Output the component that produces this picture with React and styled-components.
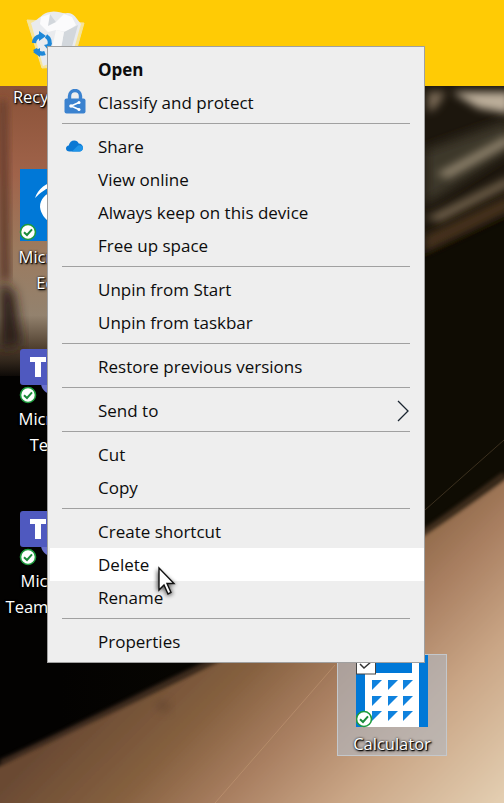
import React from "react";
import styled, { createGlobalStyle } from "styled-components";

const Global = createGlobalStyle`
  html, body { margin: 0; padding: 0; width: 504px; height: 803px; overflow: hidden; background: #000; }
  * { box-sizing: border-box; }
`;

const Desktop = styled.div`
  position: relative;
  width: 504px;
  height: 803px;
  overflow: hidden;
  font-family: "Open Sans", "Liberation Sans", sans-serif;
`;

const WallpaperArt = styled.svg`
  position: absolute;
  left: 0;
  top: 0;
  display: block;
`;

const BadgeLayer = styled.svg`
  position: absolute;
  left: 0;
  top: 0;
  display: block;
`;

const DesktopIcon = styled.div`
  position: absolute;
  left: ${(p) => p.$x}px;
  top: ${(p) => p.$y}px;
  width: ${(p) => p.$w || 100}px;
  display: flex;
  flex-direction: column;
  align-items: center;
`;

const IconLabel = styled.div`
  color: #fff;
  font-size: 16.5px;
  line-height: 26px;
  text-align: center;
  white-space: nowrap;
  text-shadow: 1px 1px 1px #000, 1px 1px 3px #000, 0 0 2px rgba(0, 0, 0, 0.7);
`;

const SelectedIcon = styled.div`
  position: absolute;
  left: 337px;
  top: 654px;
  width: 110px;
  height: 102px;
  display: flex;
  flex-direction: column;
  align-items: center;
  background: rgba(178, 184, 194, 0.62);
  border: 1px solid #c4c8cc;
`;

const CalcArt = styled.svg`
  display: block;
  flex: none;
`;

const CalcLabel = styled(IconLabel)`
  margin-top: 3px;
`;

const Menu = styled.div`
  position: absolute;
  left: 47px;
  top: 46px;
  width: 378px;
  height: 617px;
  padding: 6px 0;
  background: #eeeeee;
  border: 1px solid #a0a0a0;
  display: flex;
  flex-direction: column;
`;

const Row = styled.div`
  height: 33px;
  flex: none;
  display: flex;
  align-items: center;
  margin-left: 2px;
  padding-left: 48px;
  padding-right: 15px;
  position: relative;
  font-size: 17px;
  font-weight: ${(p) => (p.$bold ? 700 : 400)};
  color: #0c0c0c;
  background: ${(p) => (p.$hover ? "#ffffff" : "transparent")};
`;

const RowIcon = styled.span`
  position: absolute;
  display: block;
  line-height: 0;
  left: ${(p) => p.$left}px;
  top: ${(p) => p.$top}px;
`;

const RowText = styled.span`
  flex: 1;
  white-space: nowrap;
`;

const Separator = styled.div`
  flex: none;
  height: 1px;
  background: #a0a0a0;
  margin: 4px 14px 6px 14px;
`;

const Cursor = styled.svg`
  position: absolute;
  left: 150px;
  top: 560px;
  overflow: visible;
`;

const Wallpaper = () => (
  <WallpaperArt width="504" height="803" viewBox="0 0 504 803">
    <defs>
      <linearGradient id="sand" gradientUnits="userSpaceOnUse" x1="300" y1="490" x2="558" y2="748">
        <stop offset="0" stopColor="#6a4a33" />
        <stop offset="0.25" stopColor="#85603f" />
        <stop offset="0.45" stopColor="#a87e60" />
        <stop offset="0.68" stopColor="#c9a585" />
        <stop offset="1" stopColor="#e4cfb2" />
      </linearGradient>
      <linearGradient id="left" gradientUnits="userSpaceOnUse" x1="0" y1="86" x2="0" y2="380">
        <stop offset="0" stopColor="#8a5238" />
        <stop offset="0.3" stopColor="#a0634a" />
        <stop offset="0.55" stopColor="#9c7a5e" />
        <stop offset="0.78" stopColor="#93826e" />
        <stop offset="0.9" stopColor="#4a3a2a" />
        <stop offset="1" stopColor="#050302" />
      </linearGradient>
      <linearGradient id="night" gradientUnits="userSpaceOnUse" x1="60" y1="0" x2="425" y2="0">
        <stop offset="0" stopColor="#030201" />
        <stop offset="1" stopColor="#0f0c03" />
      </linearGradient>
      <filter id="b6" x="-30%" y="-30%" width="160%" height="160%"><feGaussianBlur stdDeviation="6" /></filter>
      <filter id="b4" x="-30%" y="-80%" width="160%" height="260%"><feGaussianBlur stdDeviation="4" /></filter>
      <filter id="b2" x="-10%" y="-30%" width="120%" height="160%"><feGaussianBlur stdDeviation="2" /></filter>
    </defs>
    <rect width="504" height="803" fill="url(#night)" />
    <rect x="0" y="86" width="60" height="290" fill="url(#left)" />
    <path d="M0 280 L14 292 L22 345 L0 350Z" fill="#2a1c12" filter="url(#b6)" />
    <path d="M0 100 L6 100 L10 280 L0 280Z" fill="#5a3426" filter="url(#b4)" />

    <path d="M415 80 H514 V212 L415 258Z" fill="#1c160c" filter="url(#b4)" />
    <path d="M428 92 L446 92 L436 108 L428 112Z" fill="#7a6a56" filter="url(#b4)" />
    <path d="M452 92 H510 V114 L478 108Z" fill="#bcae9a" filter="url(#b4)" />
    <path d="M425 150 L510 120 V150 L425 205Z" fill="#3d382b" filter="url(#b6)" />
    <path d="M436 174 L510 134 V144 L448 178Z" fill="#91846e" filter="url(#b4)" />
    <path d="M425 218 L510 176 V186 L440 222Z" fill="#6e5e48" filter="url(#b4)" />
    <path d="M425 236 L510 196 V210 L425 252Z" fill="#46331f" filter="url(#b4)" />

    <path d="M-10 770 C60 735 140 700 220 660 C300 615 400 555 514 472 V813 H-10Z" fill="url(#sand)" filter="url(#b2)" />
    <path d="M0 762 C60 735 140 695 222 656 C300 612 400 552 504 474" fill="none" stroke="#8a6146" strokeWidth="2.5" opacity="0.7" filter="url(#b2)" />
    <path d="M425 510 L504 440" fill="none" stroke="#5a4a32" strokeWidth="1" opacity="0.6" />
    <path d="M215 803 L335 665" fill="none" stroke="#c79d78" strokeWidth="1" opacity="0.5" />
    <ellipse cx="163" cy="706" rx="8" ry="6" fill="#5c3f2c" opacity="0.5" filter="url(#b4)" />
    <rect width="504" height="86" fill="#ffcb05" />
  </WallpaperArt>
);

const Check = ({ x, y }) => (
  <g transform={`translate(${x} ${y})`}>
    <circle r="7.5" fill="#fff" stroke="#1e9b3d" strokeWidth="1.6" />
    <path d="M-4 0.2 L-1 3 L4 -2.6" fill="none" stroke="#1b8a3a" strokeWidth="2" />
  </g>
);

const RecycleBin = () => (
  <svg width="60" height="62" viewBox="0 0 60 62">
    <path d="M1 12 L58 15 L46 58 L16 60 Z" fill="#f7e8a6" fillOpacity="0.9" stroke="#f3e3a0" strokeWidth="1" />
    <path d="M5 15 C14 11 16 5 24 4 C30 2 36 6 42 5 C48 5 50 10 55 16 L46 48 L17 58 Z" fill="#e9ebee" />
    <path d="M15 9 L24 6 L30 14 L38 6 L46 9 L50 17 L40 24 L30 22 L22 24 L14 16Z" fill="#fbfbfc" />
    <path d="M24 6 L30 14 L22 18Z M38 24 L52 17 L44 46 L34 46Z" fill="#d2d7dc" />
    <path d="M30 22 L38 24 L34 46 L26 40Z" fill="#f8f8f8" />
    <g fill="none" stroke="#1e88d8" strokeWidth="4.2">
      <path d="M8 35 A 8 8 0 0 1 14 28" />
      <path d="M20 28 A 8 8 0 0 1 23 38" />
      <path d="M19 45 A 8 8 0 0 1 9 41" />
    </g>
    <path d="M13 23 L20 28 L13 33Z M26 35 L23 43 L18 37Z M14 40 L14 49 L7 44Z" fill="#1e88d8" />
  </svg>
);

const EdgeTile = () => (
  <svg width="72" height="72" viewBox="0 0 72 72">
    <rect width="72" height="72" fill="#0078d7" />
    <path d="M15 29 C18 20 26 13 38 12 C48 11 56 18 58 28 C50 18 42 15 34 17 C26 19 20 24 15 29Z" fill="#fff" />
    <path d="M33 23 C44 22 54 26 58 36 L36 40 C37 48 46 54 58 50 L58 58 C42 62 22 54 20 38 C20 30 26 24 33 23Z" fill="#fff" />
  </svg>
);

const TeamsTile = () => (
  <svg width="80" height="50" viewBox="0 0 80 50">
    <circle cx="32" cy="34" r="11" fill="#6a70cc" />
    <rect x="0" y="0" width="62" height="36" rx="3" fill="#4f59bf" />
    <path d="M10 8 H26 V13 H21 V28 H15 V13 H10Z" fill="#fff" />
  </svg>
);

const Lock = () => (
  <svg width="22" height="25" viewBox="0 0 22 25">
    <path d="M5.5 11 V7 a5.5 5.5 0 0 1 11 0 V11" fill="none" stroke="#3b82cf" strokeWidth="3.4" />
    <rect x="0.5" y="9.5" width="21" height="15" rx="2" fill="#3b82cf" />
    <path d="M15 13.5 L7 17 L15 20.5" fill="none" stroke="#fff" strokeWidth="1.6" />
    <circle cx="7" cy="17" r="1.7" fill="#fff" />
    <circle cx="15" cy="13.5" r="1.5" fill="#fff" />
    <circle cx="15" cy="20.5" r="1.5" fill="#fff" />
  </svg>
);

const Cloud = () => (
  <svg width="17" height="12" viewBox="0 0 17 12">
    <path d="M3.6 11.5 C1.4 11.5 0 10.2 0 8.5 C0 6.9 1.2 5.8 2.7 5.6 C3.4 2.4 5.6 0.5 8.2 0.5 C10.4 0.5 12 1.7 12.7 3.6 C15 3.7 17 5.4 17 7.8 C17 10 15.4 11.5 13.4 11.5Z" fill="#0a78d4" />
    <path d="M6 11.5 L12 5.5 C14.5 4.6 17 5.6 17 8 C17 10 15.4 11.5 13.4 11.5Z" fill="#1f94e8" />
  </svg>
);

const Chevron = () => (
  <svg width="12" height="22" viewBox="0 0 12 22">
    <path d="M1 1 L11 11 L1 21" fill="none" stroke="#1a2530" strokeWidth="1.3" />
  </svg>
);

const triangleRows = [680, 696, 711];
const triangleCols = [372, 388, 403];

const Calculator = () => (
  <CalcArt width="72" height="73" viewBox="356 655 72 73">
    <rect x="356" y="655" width="72" height="72" fill="#0078d7" />
    <rect x="365" y="655" width="54" height="72" fill="#fff" />
    <rect x="372" y="655" width="40" height="18" fill="#0078d7" />
    {triangleRows.map((r) =>
      triangleCols.map((c) => (
        <path key={`${r}-${c}`} d={`M${c} ${r} h10 l-10 10z`} fill="#0f82de" />
      ))
    )}
    <rect x="356.5" y="655" width="19" height="19" fill="#fff" stroke="#444" />
    <path d="M360 664 L364 668 L372 661" fill="none" stroke="#333" strokeWidth="1.5" />
    <Check x={364} y={719} />
  </CalcArt>
);

const groups = [
  [{ t: "Open", bold: true }, { t: "Classify and protect", icon: "lock" }],
  [{ t: "Share", icon: "cloud" }, { t: "View online" }, { t: "Always keep on this device" }, { t: "Free up space" }],
  [{ t: "Unpin from Start" }, { t: "Unpin from taskbar" }],
  [{ t: "Restore previous versions" }],
  [{ t: "Send to", sub: true }],
  [{ t: "Cut" }, { t: "Copy" }],
  [{ t: "Create shortcut" }, { t: "Delete", hover: true }, { t: "Rename" }],
  [{ t: "Properties" }],
];

const MenuRow = ({ item }) => (
  <Row $bold={item.bold} $hover={item.hover}>
    {item.icon === "lock" && (
      <RowIcon $left={14} $top={3}><Lock /></RowIcon>
    )}
    {item.icon === "cloud" && (
      <RowIcon $left={16} $top={10}><Cloud /></RowIcon>
    )}
    <RowText>{item.t}</RowText>
    {item.sub && <Chevron />}
  </Row>
);

export default function App() {
  return (
    <Desktop>
      <Global />
      <Wallpaper />

      <DesktopIcon $x={26} $y={8} $w={60}><RecycleBin /></DesktopIcon>
      <DesktopIcon $x={6} $y={84}><IconLabel>Recycle Bin</IconLabel></DesktopIcon>

      <DesktopIcon $x={20} $y={169} $w={72}><EdgeTile /></DesktopIcon>
      <DesktopIcon $x={5} $y={244}><IconLabel>Microsoft<br />Edge</IconLabel></DesktopIcon>

      <DesktopIcon $x={20} $y={349} $w={80}><TeamsTile /></DesktopIcon>
      <DesktopIcon $x={5} $y={406}><IconLabel>Microsoft<br />Teams</IconLabel></DesktopIcon>

      <DesktopIcon $x={20} $y={511} $w={80}><TeamsTile /></DesktopIcon>
      <DesktopIcon $x={7} $y={568}><IconLabel>Microsoft<br />Teams (work)</IconLabel></DesktopIcon>

      <BadgeLayer width="504" height="803">
        <Check x={28} y={232} />
        <Check x={28} y={395} />
        <Check x={28} y={557} />
      </BadgeLayer>

      <SelectedIcon>
        <Calculator />
        <CalcLabel>Calculator</CalcLabel>
      </SelectedIcon>

      <Menu>
        {groups.map((g, i) => (
          <React.Fragment key={i}>
            {i > 0 && <Separator />}
            {g.map((item) => <MenuRow key={item.t} item={item} />)}
          </React.Fragment>
        ))}
      </Menu>

      <Cursor width="24" height="36" viewBox="0 0 24 36">
        <path d="M7 9 V32 L13 28 L17 36 L23 34 L19 25 L26 25Z" fill="#000" opacity="0.6" filter="blur(2px)" />
        <path d="M9 8 V30 L14 25 L18 34 L21 32.5 L17 23.5 L24 23.5Z" fill="#fff" stroke="#111" strokeWidth="1.4" />
      </Cursor>
    </Desktop>
  );
}
